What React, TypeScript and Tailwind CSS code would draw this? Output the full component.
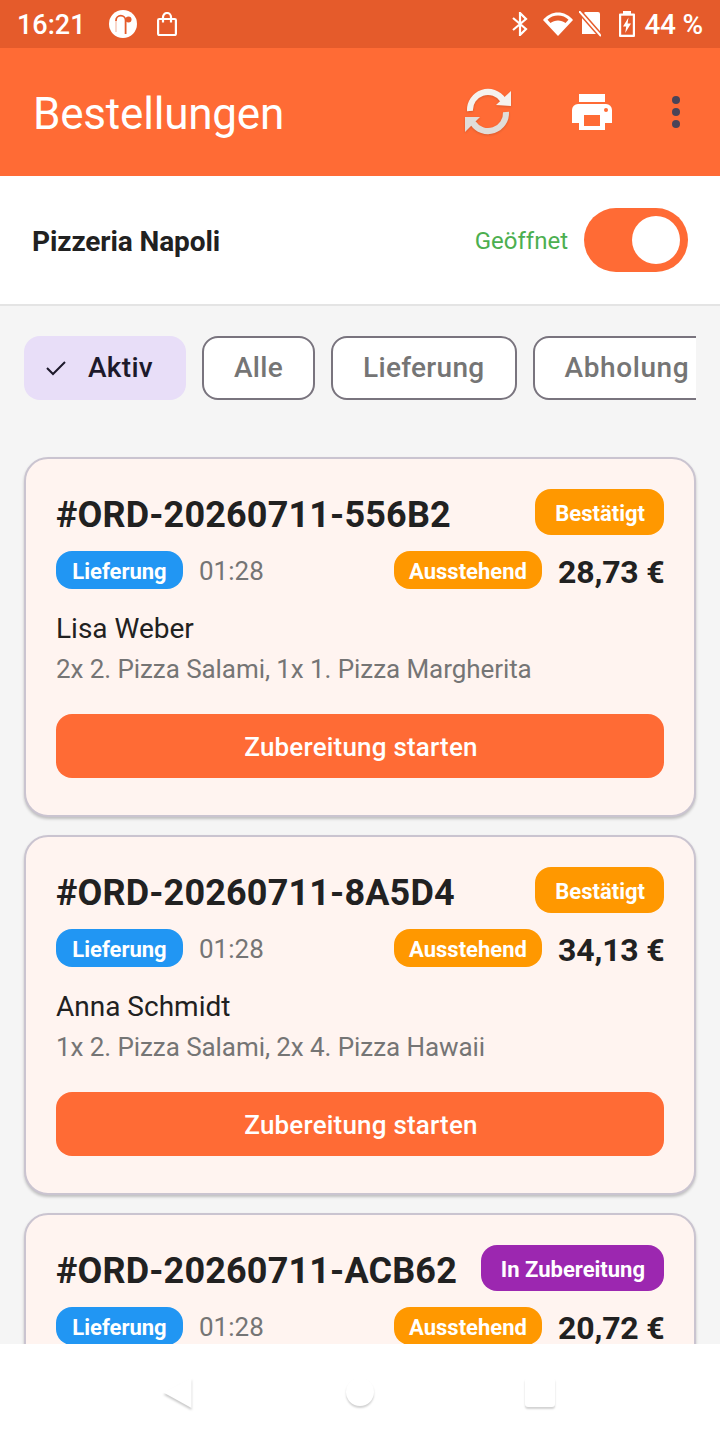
import React from 'react';

type Order = {
  id: string;
  status: string;
  statusColor: string;
  price: string;
  name?: string;
  items?: string;
};

const orders: Order[] = [
  { id: '#ORD-20260711-556B2', status: 'Bestätigt', statusColor: 'bg-[#FF9800]', price: '28,73 €', name: 'Lisa Weber', items: '2x 2. Pizza Salami, 1x 1. Pizza Margherita' },
  { id: '#ORD-20260711-8A5D4', status: 'Bestätigt', statusColor: 'bg-[#FF9800]', price: '34,13 €', name: 'Anna Schmidt', items: '1x 2. Pizza Salami, 2x 4. Pizza Hawaii' },
  { id: '#ORD-20260711-ACB62', status: 'In Zubereitung', statusColor: 'bg-[#9C27B0]', price: '20,72 €' },
];

const StatusBar = () => (
  <div className="h-12 shrink-0 bg-[#E55B2B] flex items-center text-white pl-[17px] pr-[17px]">
    <span className="text-[27px] font-medium leading-none w-[68px] pt-[2px]">16:21</span>
    <svg viewBox="0 0 28 28" className="w-[28px] h-[28px] ml-[24px]">
      <circle cx="14" cy="14" r="14" fill="#fff" />
      <path d="M7 11V22" fill="none" stroke="#E55B2B" strokeWidth="1.200" opacity="0.4" />
      <path d="M7 11V10.500a4.800 4.800 0 0 1 9.600 0V24" fill="none" stroke="#E55B2B" strokeWidth="1.800" />
      <circle cx="19.500" cy="9.500" r="3" fill="#E55B2B" />
    </svg>
    <svg viewBox="0 0 20 24" className="w-[20px] h-[24px] ml-[20px]" fill="none" stroke="#fff" strokeWidth="2.200">
      <rect x="1.100" y="7" width="17.800" height="16" rx="1.200" />
      <path d="M6 10.500V5a4 4 0 0 1 8 0v5.500" />
    </svg>
    <div className="flex-1" />
    <svg viewBox="0 0 16 24" className="w-[16px] h-[24px]" fill="none" stroke="#fff" strokeWidth="2.200">
      <path d="M1 6l13 11-6 6V1l6 6L1 18" />
    </svg>
    <svg viewBox="0 0 30 26" className="w-[30px] h-[26px] ml-[15px]">
      <path d="M15 25L0 9C8-1 22-1 30 9z" fill="#fff" />
      <path d="M15 4.500c-4 0-8 1.500-10.500 4.300l3 3.200c2-1.600 4.700-2.500 7.500-2.500s5.500 .9 7.500 2.500l3-3.200C23 6 19 4.500 15 4.500z" fill="#E55B2B" />
    </svg>
    <svg viewBox="0 0 22 26" className="w-[22px] h-[26px] ml-[6px]">
      <path d="M6 1h13a2 2 0 0 1 2 2v20H3V4z" fill="#fff" />
      <path d="M0 0l22 25" stroke="#E55B2B" strokeWidth="5" />
      <path d="M0 0l22 25" stroke="#fff" strokeWidth="2" />
    </svg>
    <svg viewBox="0 0 16 26" className="w-[16px] h-[26px] ml-[18px]">
      <path d="M4 0h8v2.500h3a1 1 0 0 1 1 1V25a1 1 0 0 1-1 1H1a1 1 0 0 1-1-1V3.500a1 1 0 0 1 1-1h3z" fill="#fff" />
      <rect x="2.200" y="4.700" width="11.600" height="19" fill="#E55B2B" />
      <path d="M9.500 6.500L4 15.500h3.200l-1 6.500 5.800-9.500H8.600z" fill="#fff" />
    </svg>
    <span className="text-[28px] font-medium leading-none ml-[9px] tracking-[-0.2px] pt-[2px] whitespace-nowrap">44 %</span>
  </div>
);

const AppBar = () => (
  <div className="h-32 shrink-0 bg-[#FF6B35] flex items-center pl-[33px] pr-[108px] relative">
    <h1 className="text-[44px] text-white font-normal leading-none pt-[4px] tracking-[-0.2px]">Bestellungen</h1>
    <div className="flex-1" />
    <svg viewBox="0 0 48 48" className="w-[48px] h-[48px] mr-[60px] drop-shadow-[0_1px_1px_rgba(0,0,0,0.15)]" fill="none">
      <path d="M6 23A18 18 0 0 1 39 12" stroke="#F5F2EE" strokeWidth="6" />
      <path d="M47 3v15l-15-1z" fill="#F5F2EE" />
      <path d="M42 24A18 18 0 0 1 9 35" stroke="#E0DDD9" strokeWidth="6" />
      <path d="M1 29v15l15-15z" fill="#E0DDD9" />
    </svg>
    <svg viewBox="0 0 40 36" className="w-[40px] h-[36px]">
      <rect x="7" y="0" width="26" height="8" fill="#fff" />
      <path d="M6 10h28a6 6 0 0 1 6 6v13h-7v7H7v-7H0V16a6 6 0 0 1 6-6z" fill="#fff" />
      <rect x="12" y="21" width="16" height="11" fill="#FF6B35" />
      <circle cx="34" cy="16" r="2" fill="#FF6B35" />
    </svg>
    <div className="absolute left-[672px] top-[48px] flex flex-col gap-[4px]">
      <span className="w-2 h-2 rounded-full bg-[#4A4458]" />
      <span className="w-2 h-2 rounded-full bg-[#4A4458]" />
      <span className="w-2 h-2 rounded-full bg-[#4A4458]" />
    </div>
  </div>
);

const Chip = ({ label, spacing }: { label: string; spacing: string }) => (
  <div className={`h-16 shrink-0 rounded-2xl border-2 border-[#79747E] bg-white px-[30px] flex items-center text-[28px] font-medium text-[#757575] ${spacing}`}>
    {label}
  </div>
);

const OrderCard = ({ order }: { order: Order }) => (
  <div className="shrink-0 h-[360px] rounded-3xl border-2 border-[#CAC4D0] bg-[#FFF4F0] shadow-[0_2px_3px_rgba(0,0,0,0.22)] px-[30px] pt-[30px]">
    <div className="flex justify-between items-center h-[46px]">
      <span className="text-[36px] font-bold text-[#212121] leading-none tracking-[0.16px] pt-[6px]">{order.id}</span>
      <span className={`${order.statusColor} h-[46px] rounded-2xl pt-[2px] pl-5 pr-[19px] flex items-center text-[22px] font-bold text-white`}>{order.status}</span>
    </div>
    <div className="flex items-center h-[38px] mt-4">
      <span className="bg-[#2196F3] h-[38px] w-[127px] rounded-2xl pt-[2px] flex items-center justify-center text-[22px] font-bold text-white">Lieferung</span>
      <span className="ml-4 text-[26px] text-[#757575] pt-[2px]">01:28</span>
      <div className="flex-1" />
      <span className="bg-[#FF9800] h-[38px] w-[148px] rounded-2xl pt-[2px] flex items-center justify-center text-[22px] font-bold text-white">Ausstehend</span>
      <span className="ml-4 w-[106px] shrink-0 text-right whitespace-nowrap text-[32px] font-bold text-[#212121] tracking-[-0.15px] pt-[4px]">{order.price}</span>
    </div>
    {order.name && (
      <>
        <p className="mt-[22px] text-[28px] leading-[36px] text-[#212121]">{order.name}</p>
        <p className="mt-[5px] text-[26px] leading-[34px] text-[#757575] tracking-[-0.07px]">{order.items}</p>
        <button className="mt-[28px] w-full h-16 rounded-2xl bg-[#FF6B35] pt-[2px] pl-[2px] text-white text-[26px] font-medium tracking-[0.2px]">Zubereitung starten</button>
      </>
    )}
  </div>
);

const NavBar = () => (
  <div className="h-24 shrink-0 bg-white relative z-10">
    <svg viewBox="0 0 32 34" className="absolute left-[162px] top-[33px] w-[32px] h-[34px] drop-shadow-[0_2px_1px_rgba(0,0,0,0.22)]">
      <path d="M29.500 1v30L1.500 15.500z" fill="#fff" />
    </svg>
    <span className="absolute left-[346px] top-[34px] w-[28px] h-[28px] rounded-full bg-white shadow-[0_2px_2px_rgba(0,0,0,0.18)]" />
    <span className="absolute left-[525px] top-[34px] w-[30px] h-[29px] rounded-[3px] bg-white shadow-[0_2px_2px_rgba(0,0,0,0.18)]" />
  </div>
);

export default function App() {
  return (
    <div className="w-[720px] h-[1440px] flex flex-col overflow-hidden bg-[#F5F5F5] font-['Roboto',sans-serif]">
      <StatusBar />
      <AppBar />
      <div className="h-[130px] shrink-0 bg-white border-b-2 border-[#E4E4E4] flex items-center pl-[32px] pr-[32px]">
        <span className="text-[28px] font-bold text-[#212121] pt-[4px] tracking-[-0.1px]">Pizzeria Napoli</span>
        <div className="flex-1" />
        <span className="text-[24px] text-[#4CAF50] mr-4 pt-[2px]">Geöffnet</span>
        <div className="w-[104px] h-16 rounded-full bg-[#FF6B35] flex items-center justify-end pr-2">
          <span className="w-12 h-12 rounded-full bg-white" />
        </div>
      </div>
      <div className="flex-1 min-h-0 overflow-hidden px-6">
        <div className="flex gap-4 pt-[30px] overflow-hidden">
          <div className="h-16 w-[162px] shrink-0 rounded-2xl bg-[#E8DEF8] flex items-center pl-[22px] text-[28px] font-medium text-[#1D192B] tracking-[0.3px]">
            <svg viewBox="0 0 20 16" className="w-[20px] h-[16px] mr-[22px]" fill="none" stroke="#1D192B" strokeWidth="2">
              <path d="M1 8l6 6L19 2" />
            </svg>
            Aktiv
          </div>
          <Chip label="Alle" spacing="tracking-[0.3px]" />
          <Chip label="Lieferung" spacing="tracking-[0.3px]" />
          <Chip label="Abholung" spacing="tracking-[0.6px]" />
        </div>
        <div className="flex flex-col gap-[18px] mt-[57px]">
          {orders.map(order => (
            <OrderCard key={order.id} order={order} />
          ))}
        </div>
      </div>
      <NavBar />
    </div>
  );
}
